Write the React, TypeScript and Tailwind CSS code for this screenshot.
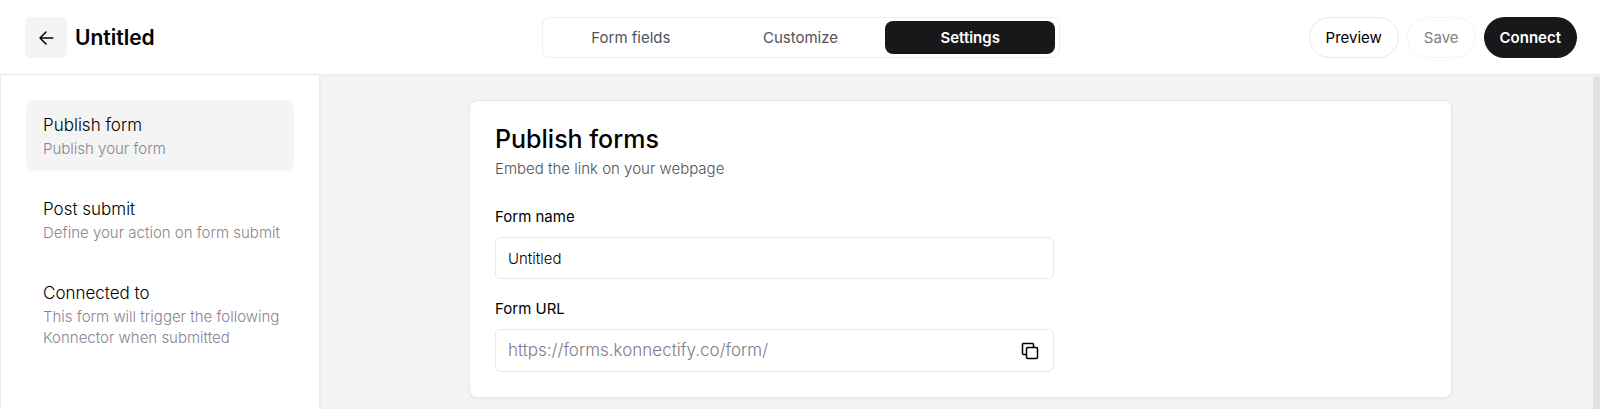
import { useState } from 'react';

const TABS = ['Form fields', 'Customize', 'Settings'] as const;
type Tab = typeof TABS[number];

const SECTIONS = [
  { id: 'publish',   title: 'Publish form', text: 'Publish your form' },
  { id: 'submit',    title: 'Post submit',  text: 'Define your action on form submit' },
  { id: 'connected', title: 'Connected to', text: 'This form will trigger the following Konnector when submitted' },
];

function BackIcon() {
  return (
    <svg width="16" height="16" viewBox="0 0 16 16" fill="none" stroke="currentColor" strokeWidth="1.5" strokeLinecap="round" strokeLinejoin="round">
      <path d="M14.7 8H2M8 2 2 8l6 6" />
    </svg>
  );
}

function CopyIcon() {
  return (
    <svg width="18" height="18" viewBox="0 0 18 18" fill="none" stroke="currentColor" strokeWidth="1.5" strokeLinejoin="round">
      <path d="M5 12.5H2.5a1 1 0 0 1-1-1v-9a1 1 0 0 1 1-1h9a1 1 0 0 1 1 1V5" />
      <rect x="5.5" y="5.5" width="11" height="11" rx="1.2" />
    </svg>
  );
}

export default function App() {
  const [tab, setTab]         = useState<Tab>('Settings');
  const [section, setSection] = useState('publish');
  const [name, setName]       = useState('Untitled');

  return (
    <div className="flex h-screen flex-col overflow-hidden bg-white font-['Inter',sans-serif] text-[15px] text-black">

      {/* Header */}
      <header className="grid shrink-0 grid-cols-[1fr_518px_1fr] items-center border-b border-[#e8e8e9] pt-[17px] pr-[23px] pb-4 pl-[25px]">
        <div className="flex items-center gap-2">
          <button aria-label="Back" className="flex h-[41px] w-[42px] items-center justify-center rounded-md bg-[#f4f4f4]">
            <BackIcon />
          </button>
          <h1 className="text-[21px] leading-7 font-semibold">Untitled</h1>
        </div>

        <nav className="flex h-[41px] rounded-lg border border-[#eeeeef] p-[3px] pr-1">
          {TABS.map(t => (
            <button
              key={t}
              onClick={() => setTab(t)}
              className={`flex-1 rounded-lg pt-0.5 ${
                tab === t ? 'bg-[#18181a] font-semibold text-white' : 'text-[#51525c]'
              }`}
            >
              {t}
            </button>
          ))}
        </nav>

        <div className="flex justify-end gap-2">
          <button className="h-[41px] rounded-full border border-[#e8e8e9] px-4 pt-0.5">Preview</button>
          <button disabled className="h-[41px] rounded-full border border-[#f4f4f4] px-4 pt-0.5 text-[#808080]">Save</button>
          <button className="h-[41px] rounded-full bg-[#18181a] px-4 pt-0.5 font-semibold text-white">Connect</button>
        </div>
      </header>

      <div className="flex min-h-0 flex-1">

        {/* Sidebar */}
        <aside className="flex w-[320px] shrink-0 flex-col gap-[13px] border-x border-[#e8e8e9] p-[25px]">
          {SECTIONS.map(s => (
            <button
              key={s.id}
              onClick={() => setSection(s.id)}
              className={`rounded-lg pt-[13px] pr-3 pb-3 pl-[17px] text-left font-light ${section === s.id ? 'bg-[#f4f4f4]' : ''}`}
            >
              <span className="block text-[17px] leading-[25px]">{s.title}</span>
              <span className="block leading-[21px] text-[#858693]">{s.text}</span>
            </button>
          ))}
        </aside>

        {/* Content */}
        <main className="relative flex-1 overflow-hidden border-l border-[#eeeeef] bg-[#f3f3f3] py-[25px]">
          <section className="mx-auto max-w-[983px] rounded-lg border border-[#e8e8e9] bg-white p-[25px] shadow-xs">
            <h2 className="text-[25px] leading-[26px] font-medium">Publish forms</h2>
            <p className="mt-[6px] leading-[21px] font-light text-[#51525c]">Embed the link on your webpage</p>

            <label htmlFor="form-name" className="mt-[27px] block leading-[21px]">Form name</label>
            <input
              id="form-name"
              value={name}
              onChange={e => setName(e.target.value)}
              className="mt-[10px] block h-[42px] w-full max-w-[559px] rounded-md border border-[#e8e8e9] px-3 font-light outline-none"
            />

            <label htmlFor="form-url" className="mt-[19px] block leading-[21px]">Form URL</label>
            <div className="mt-[10px] flex h-[43px] w-full max-w-[559px] items-center rounded-md border border-[#e8e8e9] pr-[14px] pl-3">
              <input
                id="form-url"
                readOnly
                value="https://forms.konnectify.co/form/"
                className="min-w-0 flex-1 text-[17px] font-light text-[#7c7d8a] outline-none"
              />
              <button aria-label="Copy form URL">
                <CopyIcon />
              </button>
            </div>
          </section>

          {/* Scroll thumb */}
          <div className="absolute top-px right-0 h-[420px] w-[7px] rounded-full bg-[#e1e1e3]" />
        </main>
      </div>
    </div>
  );
}
